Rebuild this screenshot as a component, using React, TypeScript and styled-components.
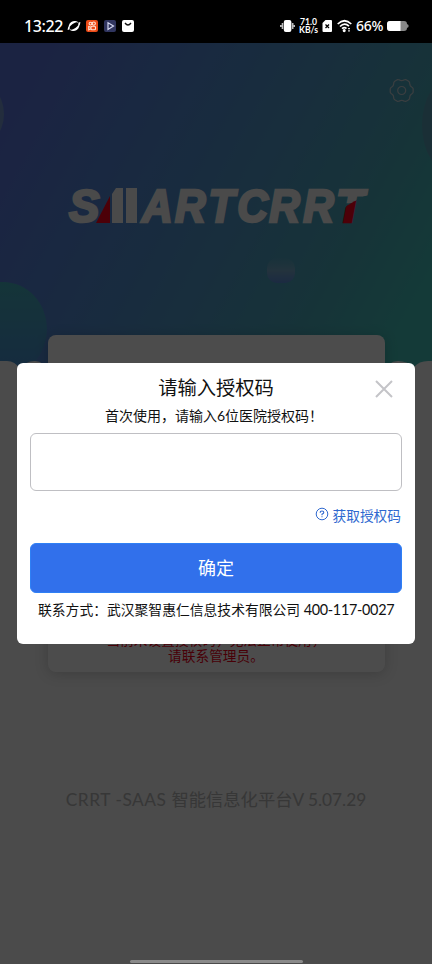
import React from "react";
import styled, { createGlobalStyle } from "styled-components";

const Global = createGlobalStyle`
  * { box-sizing: border-box; }
  body { margin: 0; background: #000; font-family: Lato, "Noto Sans CJK SC", sans-serif; }
`;

const Screen = styled.div`
  width: 432px;
  height: 964px;
  position: relative;
  display: flex;
  flex-direction: column;
  overflow: hidden;
  background: #fafafa;
`;

const StatusBar = styled.header`
  height: 43px;
  flex: none;
  background: #000;
  color: #fff;
  padding: 9px 23px 0 24px;
  display: flex;
  align-items: center;
  justify-content: space-between;
`;
const StatusGroup = styled.div<{ $gap: number }>`
  display: flex;
  align-items: center;
  gap: ${(p) => p.$gap}px;
`;
const Clock = styled.span`
  font: 500 16px/18px "Noto Sans";
  letter-spacing: -0.4px;
  width: 38px;
  white-space: nowrap;
`;
const Speed = styled.span`
  display: flex;
  flex-direction: column;
  align-items: center;
  font: 700 8.6px/8px Lato;
  width: 19px;
  white-space: nowrap;
`;
const Battery = styled.span`
  font: 500 14px/18px "Noto Sans";
  letter-spacing: -0.3px;
  width: 27px;
`;

const Page = styled.main`
  flex: 1;
  display: flex;
  flex-direction: column;
  align-items: center;
  position: relative;
`;
const Hero = styled.svg`
  display: block;
  width: 432px;
  height: 330px;
  flex: none;
`;
const LoginCard = styled.section`
  width: 337px;
  height: 337px;
  margin-top: -38px;
  flex: none;
  border-radius: 8px;
  background: #fff;
  box-shadow: 0 2px 14px rgba(0, 0, 0, 0.18);
  display: flex;
  flex-direction: column;
  justify-content: flex-end;
  align-items: center;
  padding-bottom: 8px;
`;
const Warning = styled.p`
  margin: 0;
  text-align: center;
  font-size: 13.7px;
  line-height: 16px;
  color: #f00018;
  white-space: pre-line;
`;
const Version = styled.footer`
  margin-top: 115px;
  font-size: 17.3px;
  line-height: 26px;
  color: #b8b8b8;
  white-space: nowrap;
`;
const Product = styled.span`
  letter-spacing: 0.55px;
`;

const Overlay = styled.div`
  position: absolute;
  inset: 43px 0 0;
  background: rgba(0, 0, 0, 0.7);
  display: flex;
  flex-direction: column;
  align-items: center;
  justify-content: space-between;
  padding-top: 320px;
`;
const Dialog = styled.section`
  width: 398px;
  height: 281px;
  border-radius: 6px;
  background: #fff;
  padding: 10px 13px 0;
  color: #111;
`;
const DialogHead = styled.div`
  display: grid;
  grid-template-columns: 36px 1fr 36px;
  align-items: center;
  height: 30px;
`;
const Title = styled.h1`
  grid-column: 2;
  margin: 0;
  text-align: center;
  font-weight: 400;
  font-size: 19.3px;
  line-height: 30px;
`;
const CloseButton = styled.button`
  border: 0;
  padding: 2px 0 0;
  background: none;
  width: 36px;
  height: 30px;
  display: grid;
  place-items: center;
`;
const Hint = styled.p`
  margin: 2px 0 7px;
  padding-left: 75px;
  font-size: 14px;
  line-height: 21px;
  white-space: nowrap;
`;
const CodeInput = styled.input`
  display: block;
  width: 372px;
  height: 58px;
  border: 1px solid #bfbfc3;
  border-radius: 6px;
  background: #fff;
  outline: none;
`;
const HelpLink = styled.a`
  display: flex;
  justify-content: flex-end;
  align-items: center;
  gap: 4px;
  height: 20px;
  margin-top: 15px;
  padding-right: 1px;
  font-size: 13.7px;
  line-height: 20px;
  color: #2e68cf;
  svg { margin-top: -5px; }
`;
const Confirm = styled.button`
  display: block;
  width: 372px;
  height: 50px;
  margin-top: 17px;
  padding: 0 0 2px;
  border: 1px solid #2f80f5;
  border-radius: 6px;
  background: #3170eb;
  color: #fff;
  font: 400 18px/26px "Noto Sans CJK SC", sans-serif;
`;
const Contact = styled.p`
  margin: 6px 0 0 8px;
  font-size: 13.8px;
  line-height: 21px;
  white-space: nowrap;
`;
const Phone = styled.span`
  font-size: 14.4px;
  letter-spacing: -0.3px;
`;
const HomeBar = styled.div`
  width: 173px;
  height: 3px;
  margin-bottom: 1px;
  border-radius: 2px;
  background: #8a8a8a;
`;

const gearPath =
  Array.from({ length: 73 }, (_, i) => {
    const a = (i * 5 * Math.PI) / 180;
    const wave = Math.cos(6 * a);
    const r = 10.9 + 0.8 * Math.sign(wave) * Math.pow(Math.abs(wave), 0.6) - 0.25 * Math.cos(12 * a);
    return `${i ? "L" : "M"}${(r * Math.cos(a)).toFixed(2)} ${(r * Math.sin(a)).toFixed(2)}`;
  }).join("") + "Z";

function HeroArt() {
  return (
    <Hero viewBox="0 43 432 330">
      <defs>
        <linearGradient id="sky" gradientUnits="userSpaceOnUse" x1="0" y1="130" x2="400" y2="350">
          <stop offset="0" stopColor="#5c76de" />
          <stop offset=".25" stopColor="#5587d9" />
          <stop offset=".55" stopColor="#519bcb" />
          <stop offset=".78" stopColor="#4cabbd" />
          <stop offset="1" stopColor="#43c4bb" />
        </linearGradient>
        <linearGradient id="ball" x1="0" y1="0" x2="0" y2="1">
          <stop offset="0" stopColor="#45b0bd" />
          <stop offset="1" stopColor="#4a8fd5" />
        </linearGradient>
        <linearGradient id="pill" x1="0" y1="0" x2="0" y2="1">
          <stop offset="0" stopColor="#6fb0c8" stopOpacity="0.1" />
          <stop offset=".5" stopColor="#77aacc" />
          <stop offset="1" stopColor="#5c8fdc" />
        </linearGradient>
        <pattern id="swoosh" patternUnits="userSpaceOnUse" x="330" y="180" width="50" height="50">
          <path d="M0 0H50V14Q32 14 23 23L0 24Z" fill="#f8f8f8" />
          <path d="M28 20L50 18V50H0V46Q14 24 28 20Z" fill="#ff001c" />
        </pattern>
      </defs>
      <path d="M0 43H432V373H0Z" fill="url(#sky)" />
      <ellipse cx="-26" cy="114" rx="30" ry="34" fill="#7598ce" />
      <ellipse cx="452" cy="125" rx="30" ry="48" fill="#599fb5" />
      <ellipse cx="3" cy="329" rx="44" ry="47" fill="url(#ball)" />
      <rect x="267" y="258" width="28" height="25" rx="10" fill="url(#pill)" />
      <path d="M0 361H7Q15 361 20 369Q25 361 35 361Q44 361 49 373H383Q388 361 398 361Q407 361 414 367Q419 361 428 361H432V373H0Z" fill="#fafafa" />
      <g fill="#f8f8f8" stroke="#f8f8f8" strokeWidth="2.6" fontFamily="Liberation Sans" fontWeight="700" fontStyle="italic" fontSize="45.5">
        <text x="69" y="221.5">S</text>
        <g transform="translate(140.5 221.5) scale(.93 1)">
          <text x="1.5 37 73 104 138.5 175" y="0">ARTCRR</text>
        </g>
        <text x="336" y="221.5" fill="url(#swoosh)" stroke="url(#swoosh)">T</text>
      </g>
      <path d="M116 188H123V223H112V194ZM126 188H137V223H126Z" fill="#f8f8f8" />
      <path d="M110 196V223H96Z" fill="#ff001c" />
      <g transform="translate(401.7 90.5)" fill="none" stroke="#c6d0d6" strokeWidth="1.2" strokeLinejoin="round">
        <path d={gearPath} />
        <circle r="4" />
      </g>
    </Hero>
  );
}

function AppIcons() {
  return (
    <svg width="68" height="14" viewBox="0 0 68 14">
      <g transform="rotate(-35 7 7)">
        <ellipse cx="7" cy="7" rx="5.6" ry="4.8" fill="#fff" />
        <ellipse cx="7" cy="7" rx="5.2" ry="2.4" fill="#000" />
        <path d="M0 6.6Q1.6 5.8 2.4 4.6M14 7.4Q12.4 8.2 11.6 9.4" stroke="#fff" strokeWidth="1.3" fill="none" />
      </g>
      <rect x="19" y="1" width="12" height="12" rx="2" fill="#ed4b17" />
      <g fill="none" stroke="#ffe2d4" strokeWidth="1.1"><circle cx="23.5" cy="4.6" r="1.4" /><circle cx="26.8" cy="4.6" r="1.6" /><rect x="24" y="7.2" width="4.5" height="3.6" rx="1" /><path d="M24 8.2L21.7 7.5V10.8L24 9.8" /></g>
      <rect x="37" y="1" width="12" height="12" rx="2" fill="#30355f" />
      <path d="M41 3.8L46.5 7L41 10.4Z" fill="none" stroke="#d4d8f2" strokeWidth="1.2" />
      <rect x="55" y="1" width="12" height="12" rx="2" fill="#fff" />
      <path d="M58 4Q61 8 64 4" fill="none" stroke="#111" strokeWidth="1.3" />
    </svg>
  );
}

export default function App() {
  return (
    <>
      <Global />
      <Screen>
        <StatusBar>
          <StatusGroup $gap={5}>
            <Clock>13:22</Clock>
            <AppIcons />
          </StatusGroup>
          <StatusGroup $gap={4}>
            <svg width="15" height="14" viewBox="0 0 15 14">
              <rect x="3.8" y="1" width="7.6" height="12" rx="2" fill="#fff" />
              <path d="M2.5 4V10M12.7 4V10M.8 6V8M14.4 6V8" stroke="#bbb" strokeWidth="1.6" />
            </svg>
            <Speed><span>71.0</span><span>KB/s</span></Speed>
            <svg width="11" height="14" viewBox="0 0 11 14">
              <path d="M3.5 1H9Q10 1 10 2V12Q10 13 9 13H1.5Q.5 13 .5 12V4Z" fill="#fff" />
              <path d="M3.5 5.5L7 9M7 5.5L3.5 9" stroke="#000" strokeWidth="1.3" />
            </svg>
            <svg width="15" height="14" viewBox="0 0 15 14" fill="none" stroke="#fff" strokeWidth="1.7">
              <path d="M.7 5Q7.5-1.5 14.3 5M3 7.5Q7.5 3 12 7.2M5 9.7Q7.5 7.5 9.5 9.5" />
              <circle cx="7.2" cy="11.6" r=".7" fill="#fff" />
              <path d="M12 9V12.5" strokeDasharray="1.2 1" />
            </svg>
            <Battery>66%</Battery>
            <svg width="22" height="12" viewBox="0 0 22 12">
              <path d="M3 1H17Q20 1 20 4L21.5 5V7L20 8Q20 11 17 11H3Q0 11 0 8V4Q0 1 3 1" fill="#888" />
              <path d="M3 1H13.5V11H3Q0 11 0 8V4Q0 1 3 1" fill="#fff" />
            </svg>
          </StatusGroup>
        </StatusBar>
        <Page>
          <HeroArt />
          <LoginCard>
            <Warning>{"当前未设置授权码，无法正常使用，\n请联系管理员。"}</Warning>
          </LoginCard>
          <Version><Product>CRRT -SAAS </Product>智能信息化平台V 5.07.29</Version>
        </Page>
        <Overlay>
          <Dialog>
            <DialogHead>
              <Title>请输入授权码</Title>
              <CloseButton aria-label="关闭">
                <svg width="18" height="18" viewBox="0 0 18 18" stroke="#c4c4c8" strokeWidth="2"><path d="M1 1L17 17M17 1L1 17" /></svg>
              </CloseButton>
            </DialogHead>
            <Hint>首次使用，请输入6位医院授权码！</Hint>
            <CodeInput aria-label="授权码" />
            <HelpLink>
              <svg width="14" height="14" viewBox="0 0 14 14" fill="none" stroke="#2e68cf" strokeWidth="1">
                <circle cx="7" cy="7" r="5.8" />
                <path d="M5.2 5.7Q5.2 4 7 4T8.8 5.5Q8.8 6.4 7 7.2V8.3M7 9.3V10.3" strokeWidth="1.1" />
              </svg>
              获取授权码
            </HelpLink>
            <Confirm>确定</Confirm>
            <Contact>联系方式：武汉聚智惠仁信息技术有限公司 <Phone>400-117-0027</Phone></Contact>
          </Dialog>
          <HomeBar />
        </Overlay>
      </Screen>
    </>
  );
}
